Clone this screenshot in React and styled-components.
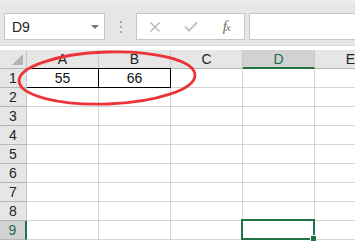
import React from 'react';
import styled, { createGlobalStyle, css } from 'styled-components';

const GREEN = '#217346';

const Global = createGlobalStyle`
  html, body { margin: 0; padding: 0; background: #fff; }
  body { font-family: "Liberation Sans", Arial, sans-serif; overflow: hidden; }
`;

const Page = styled.div`
  position: relative;
  width: 355px;
  height: 241px;
  overflow: hidden;
  background: #fff;
`;

const Toolbar = styled.div`
  height: 46px;
  box-sizing: border-box;
  background: #e6e6e6;
  border-top: 3px solid #ececec;
  border-bottom: 1px solid #dadada;
  display: flex;
  align-items: flex-start;
  padding: 10px 0 0 4px;
`;

const NameBox = styled.div`
  width: 101px;
  height: 27px;
  box-sizing: border-box;
  background: #fff;
  border: 1px solid #c6c6c6;
  display: flex;
  align-items: center;
  justify-content: space-between;
  padding: 0 5px 0 7px;
  font-size: 14px;
  color: #222;
`;

const Caret = styled.span`
  width: 0;
  height: 0;
  border-left: 4px solid transparent;
  border-right: 4px solid transparent;
  border-top: 4px solid #777;
`;

const Dots = styled.div`
  width: 31px;
  height: 27px;
  display: flex;
  flex-direction: column;
  align-items: center;
  justify-content: center;
  gap: 3px;
  span {
    width: 2px;
    height: 2px;
    background: #a8a8a8;
  }
`;

const FxBox = styled.div`
  width: 109px;
  height: 27px;
  box-sizing: border-box;
  background: #fff;
  border: 1px solid #c6c6c6;
  display: flex;
  align-items: center;
`;

const FxButton = styled.div`
  width: 36px;
  display: flex;
  align-items: center;
  justify-content: center;
`;

const FxLabel = styled.span`
  font-family: "Liberation Serif", "Times New Roman", serif;
  font-style: italic;
  font-size: 15px;
  color: #6e6e6e;
  letter-spacing: -1px;
  sub { font-size: 11px; vertical-align: 0; }
`;

const Formula = styled.div`
  flex: 1;
  height: 27px;
  margin-left: 4px;
  box-sizing: border-box;
  background: #fff;
  border: 1px solid #c6c6c6;
  border-right: none;
`;

const Sheet = styled.div`
  display: grid;
  grid-template-columns: 27px repeat(5, 72px);
  grid-auto-rows: 19px;
  margin-top: 4px;
`;

const Cell = styled.div`
  position: relative;
  box-sizing: border-box;
  border-right: 1px solid #d4d4d4;
  border-bottom: 1px solid #d4d4d4;
  display: flex;
  align-items: center;
  justify-content: center;
  font-size: 14px;
  color: #111;
  ${(p) => p.$boxed && css`
    border-right-color: #000;
    border-bottom-color: #000;
    box-shadow: 0 -1px 0 #000;
  `}
  ${(p) => p.$selected && css`
    &::after {
      content: '';
      position: absolute;
      left: -2px;
      top: -2px;
      right: -1px;
      bottom: -1px;
      border: 2px solid ${GREEN};
    }
    &::before {
      content: '';
      position: absolute;
      right: -3px;
      bottom: -3px;
      width: 5px;
      height: 5px;
      background: ${GREEN};
      border: 1px solid #fff;
      z-index: 2;
    }
  `}
`;

const Head = styled.div`
  position: relative;
  box-sizing: border-box;
  background: ${(p) => (p.$active ? '#d2d2d2' : '#e6e6e6')};
  color: ${(p) => (p.$active ? '#1e6b48' : '#222')};
  border-right: 1px solid #c8c8c8;
  border-bottom: 1px solid #b6b6b6;
  display: flex;
  align-items: center;
  justify-content: center;
  font-size: 14px;
  ${(p) => p.$active && p.$col && css`border-bottom: 2px solid ${GREEN};`}
  ${(p) => p.$active && p.$row && css`border-right: 2px solid ${GREEN};`}
`;

const Corner = styled(Head)`
  &::after {
    content: '';
    position: absolute;
    right: 3px;
    bottom: 3px;
    width: 0;
    height: 0;
    border-left: 11px solid transparent;
    border-bottom: 11px solid #b4b4b4;
  }
`;

const Ring = styled.svg`
  position: absolute;
  left: 0;
  top: 0;
  pointer-events: none;
`;

const cols = ['A', 'B', 'C', 'D', 'E'];
const data = { 1: { A: '55', B: '66' } };

export default function App() {
  const rows = [1, 2, 3, 4, 5, 6, 7, 8, 9];
  return (
    <Page>
      <Global />
      <Toolbar>
        <NameBox>
          D9
          <Caret />
        </NameBox>
        <Dots><span /><span /><span /></Dots>
        <FxBox>
          <FxButton>
            <svg width="12" height="12" viewBox="0 0 12 12">
              <path d="M1.5 1.5 L10.5 10.5 M10.5 1.5 L1.5 10.5" stroke="#b4b4b4" strokeWidth="1.4" fill="none" />
            </svg>
          </FxButton>
          <FxButton>
            <svg width="14" height="11" viewBox="0 0 14 11">
              <path d="M1 5.5 L5 9.5 L13 1.5" stroke="#c4c4c4" strokeWidth="2" fill="none" />
            </svg>
          </FxButton>
          <FxButton>
            <FxLabel>f<sub>x</sub></FxLabel>
          </FxButton>
        </FxBox>
        <Formula />
      </Toolbar>
      <Sheet>
        <Corner />
        {cols.map((c) => (
          <Head key={c} $col $active={c === 'D'}>{c}</Head>
        ))}
        {rows.map((r) => (
          <React.Fragment key={r}>
            <Head $row $active={r === 9}>{r}</Head>
            {cols.map((c) => {
              const v = data[r] && data[r][c];
              return (
                <Cell key={c} $boxed={r === 1 && (c === 'A' || c === 'B')} $selected={r === 9 && c === 'D'}>
                  {v}
                </Cell>
              );
            })}
          </React.Fragment>
        ))}
      </Sheet>
      <Ring width="355" height="241">
        <ellipse cx="107" cy="78" rx="88" ry="26" transform="rotate(-2 107 78)" fill="none" stroke="#ec3338" strokeWidth="2.8" />
      </Ring>
    </Page>
  );
}
